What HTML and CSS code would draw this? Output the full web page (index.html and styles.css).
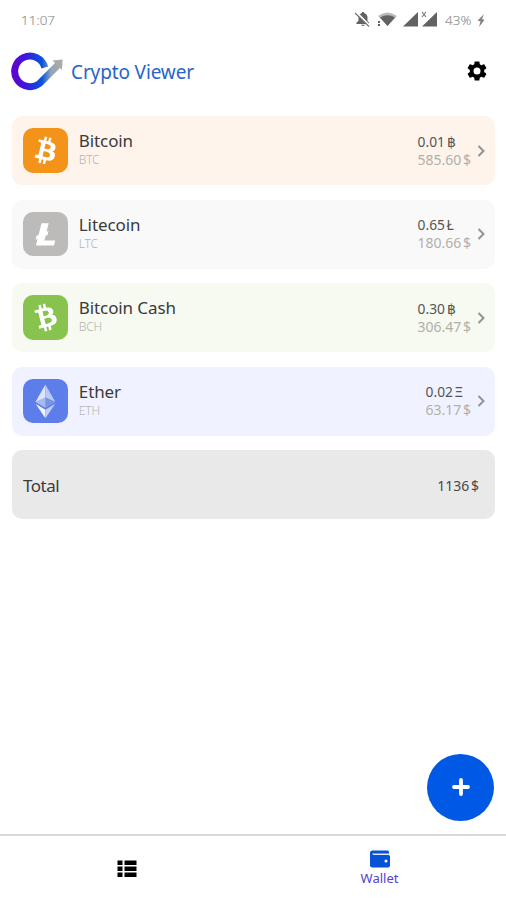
FILE: index.html
```html
<!DOCTYPE html>
<html lang="en">
<head>
<meta charset="utf-8">
<title>Crypto Viewer</title>
<link rel="stylesheet" href="styles.css">
</head>
<body>
<div class="app">
  <div class="status">
    <span class="time">11:07</span>
    <svg class="status-icons" width="90" height="20" viewBox="0 0 90 20">
      <g fill="#626262">
        <path d="M2.500 14v-1.500L4.500 11V7.500Q4.500 4 8 3V2h2v1Q13.500 4 13.500 7.500V11l1.500 1.500V14zM7 14.800h4Q9 17.300 7 14.800z"/>
        <path d="M24 6Q33-1 43 6L33.500 16z" fill="#b9b9b9"/>
        <path d="M26 7.500Q33.500 3 41 7.500L33.500 16z"/>
        <path d="M24 11h2v2h-2zM24 14h2v2h-2zM49 16.500L64 2v14.500zM68 16.500L83 2v14.500z"/>
      </g>
      <path d="M2 2L16 16" stroke="#fff" stroke-width="2"/>
      <path d="M1 3L15 16.500M68 2l4 5M72 2L68 7" stroke="#707070" stroke-width="1.100"/>
    </svg>
    <span class="battery">43%</span>
    <svg class="bolt" width="10" height="14" viewBox="0 0 10 14"><path d="M8 0L1.500 6.500l3 1-1.500 5.500L8.500 6l-2.500-1z" fill="#858585"/></svg>
  </div>
  <header class="header">
    <svg class="logo" width="52" height="42" viewBox="0 0 52 42">
      <defs><linearGradient id="ring" gradientUnits="userSpaceOnUse" x1="0" y1="0" x2="50" y2="0"><stop offset="0" stop-color="#6500cc"/><stop offset=".3" stop-color="#3c18dc"/><stop offset=".62" stop-color="#0755dc"/><stop offset=".8" stop-color="#93a5b8"/><stop offset="1" stop-color="#aaa"/></linearGradient></defs>
      <path d="M33.800 17.500A15.300 15.300 0 1 0 29.500 32.500L47.500 14.500" fill="none" stroke="url(#ring)" stroke-width="7" stroke-linejoin="round"/>
      <path d="M41.500 10.500l10-1-.5 10.500z" fill="#aaa"/>
    </svg>
    <h1 class="title">Crypto Viewer</h1>
    <svg class="gear" width="24" height="24" viewBox="0 0 24 24"><path d="M19.140 12.940c.04-.3.06-.61.06-.94s-.02-.64-.07-.94l2.030-1.580c.18-.14.23-.41.12-.61l-1.920-3.320c-.12-.22-.37-.29-.59-.22l-2.390.96c-.5-.38-1.030-.7-1.620-.94l-.36-2.540c-.04-.24-.24-.41-.48-.41h-3.840c-.24 0-.43.17-.47.41l-.36 2.540c-.59.24-1.130.57-1.620.94l-2.390-.96c-.22-.08-.47 0-.59.22L2.740 8.870c-.12.21-.08.47.12.61l2.030 1.580c-.05.3-.09.63-.09.94s.02.64.07.94l-2.030 1.580c-.18.14-.23.41-.12.61l1.920 3.320c.12.22.37.29.59.22l2.390-.96c.5.38 1.030.7 1.620.94l.36 2.540c.05.24.24.41.48.41h3.840c.24 0 .44-.17.47-.41l.36-2.540c.59-.24 1.130-.56 1.620-.94l2.390.96c.22.08.47 0 .59-.22l1.920-3.320c.12-.22.07-.47-.12-.61zM12 15.500a3.500 3.500 0 1 1 0-7 3.500 3.500 0 0 1 0 7z"/></svg>
  </header>
  <main class="cards">
    <section class="card btc">
      <svg class="coin" viewBox="0 0 32 32"><path id="bit" fill="#fff" d="M23.189 14.020c.314-2.096-1.283-3.223-3.465-3.975l.708-2.840-1.728-.43-.69 2.765c-.454-.114-.92-.22-1.385-.326l.695-2.783L15.596 6l-.708 2.839c-.376-.086-.746-.17-1.104-.26l.002-.009-2.384-.595-.46 1.846s1.283.294 1.256.312c.7.175.826.638.805 1.006l-.806 3.235c.048.012.11.03.18.057l-.183-.045-1.130 4.532c-.086.212-.303.531-.793.41.018.025-1.256-.313-1.256-.313l-.858 1.978 2.250.561c.418.105.828.215 1.231.318l-.715 2.872 1.727.43.708-2.840c.472.127.93.245 1.378.357l-.706 2.828 1.728.43.715-2.866c2.948.558 5.164.333 6.097-2.333.752-2.146-.037-3.385-1.588-4.192 1.130-.26 1.980-1.003 2.207-2.538zm-3.950 5.538c-.533 2.147-4.148.986-5.320.695l.95-3.805c1.172.293 4.929.872 4.370 3.110zm.535-5.569c-.487 1.953-3.495.96-4.470.717l.86-3.450c.975.243 4.118.696 3.610 2.733z"/></svg>
      <div class="names"><span class="name">Bitcoin</span><span class="code">BTC</span></div>
      <div class="values"><span class="amount">0.01 ฿</span><span class="fiat">585.60 $</span></div>
      <svg class="chevron" viewBox="0 0 8 14"><path d="M1.500 2L6.500 7l-5 5"/></svg>
    </section>
    <section class="card ltc">
      <svg class="coin" viewBox="0 0 32 32"><path fill="#fff" d="M10.427 19.214L9 19.768l.688-2.759 1.444-.58L13.213 8h5.129l-1.519 6.196 1.410-.571-.68 2.750-1.427.571-.848 3.483H23L22.127 24H9.252z"/></svg>
      <div class="names"><span class="name">Litecoin</span><span class="code">LTC</span></div>
      <div class="values"><span class="amount">0.65 Ł</span><span class="fiat">180.66 $</span></div>
      <svg class="chevron" viewBox="0 0 8 14"><path d="M1.500 2L6.500 7l-5 5"/></svg>
    </section>
    <section class="card bch">
      <svg class="coin" viewBox="0 0 32 32"><use href="#bit" transform="rotate(-28 16 16)"/></svg>
      <div class="names"><span class="name">Bitcoin Cash</span><span class="code">BCH</span></div>
      <div class="values"><span class="amount">0.30 ฿</span><span class="fiat">306.47 $</span></div>
      <svg class="chevron" viewBox="0 0 8 14"><path d="M1.500 2L6.500 7l-5 5"/></svg>
    </section>
    <section class="card eth">
      <svg class="coin" viewBox="0 0 32 32"><path fill="#dce5fd" d="M16 4L9 16.200l7 4.200z"/><path fill="#b9c9f8" d="M16 4l7 12.200-7 4.200z"/><path fill="#a8baf5" d="M9 16.200l7-3.200v7.400z"/><path fill="#7892e4" d="M16 13l7 3.200-7 4.200z"/><path fill="#f1f4ff" d="M9 17.700l7 4.200V28z"/><path fill="#c0cffa" d="M23 17.700l-7 4.200V28z"/></svg>
      <div class="names"><span class="name">Ether</span><span class="code">ETH</span></div>
      <div class="values"><span class="amount">0.02 Ξ</span><span class="fiat">63.17 $</span></div>
      <svg class="chevron" viewBox="0 0 8 14"><path d="M1.500 2L6.500 7l-5 5"/></svg>
    </section>
    <section class="card total"><span class="name">Total</span><span class="sum">1136 $</span></section>
  </main>
  <div class="actions"><button class="add" aria-label="Add"><svg width="18" height="18" viewBox="0 0 18 18"><path d="M9 2v14M2 9h14" stroke="#fff" stroke-width="3.800" stroke-linecap="round"/></svg></button></div>
  <nav class="tabs">
    <div class="tab"><svg width="20" height="18" viewBox="0 0 20 18"><path d="M.500.500h5v4.500h-5zM7.500.500h12v4.500h-12zM.500 6.500h5V11h-5zM7.500 6.500h12V11h-12zM.500 12.500h5V17h-5zM7.500 12.500h12V17h-12z"/></svg></div>
    <div class="tab wallet"><svg width="20" height="18" viewBox="0 0 20 18"><path fill="#0753d6" d="M2.500.500h15Q19 .500 19 2v2H3v1h15.500Q20 5 20 6.500v9Q20 17.500 18 17.500H2.500Q0 17.500 0 15V3Q0 .500 2.500.500z"/><path d="M2 3.800h17" stroke="#8fb4ee" stroke-width="1"/><circle cx="16" cy="11" r="1.500" fill="#fff"/></svg><span>Wallet</span></div>
  </nav>
</div>
</body>
</html>
```
FILE: styles.css
```css
* { box-sizing: border-box; }
body { margin: 0; background: #fff; font-family: "Noto Sans", "Open Sans", sans-serif; color: #333; }
.app { width: 506px; height: 900px; display: flex; flex-direction: column; overflow: hidden; }
svg { display: block; flex: none; }
.status { height: 40px; padding: 0 20px 0 21px; display: flex; align-items: center; color: #929292; font-family: "Open Sans", sans-serif; font-size: 13px; font-weight: 300; }
.time { font-size: 13.500px; -webkit-text-stroke: .2px; }
.status-icons { margin-left: auto; }
.battery { margin-left: 1px; width: 31px; font-size: 13.500px; -webkit-text-stroke: .2px; }
.bolt { margin-top: 2px; }
.header { height: 62px; padding: 0 17px 0 11px; display: flex; align-items: center; margin-bottom: 14px; }
.logo { margin-right: 8px; }
.title { margin: 2px 0 0; font-size: 19px; font-weight: 400; color: #2864c9; letter-spacing: -.13px; }
.gear { margin-left: auto; }
.cards { padding: 0 11px 0 12px; display: grid; gap: 14.5px; }
.card { height: 69px; border-radius: 10px; padding: 0 10px 0 11px; display: flex; align-items: center; }
.coin { width: 44.800px; height: 44.800px; border-radius: 10px; margin-right: 11px; }
.names, .values { display: flex; flex-direction: column; }
.names { margin-top: -3px; }
.name { font-size: 17px; line-height: 22px; color: #3b3b3b; letter-spacing: -.1px; }
.code { font-size: 12px; line-height: 16px; color: #b5b3b3; font-weight: 300; letter-spacing: -.2px; }
.values { margin-left: auto; margin-right: 6px; word-spacing: -2px; }
.amount { font-size: 13.800px; line-height: 18px; color: #555; }
.fiat { font-size: 14px; line-height: 18px; color: #b1afac; }
.chevron { width: 8px; height: 14px; fill: none; stroke: #929292; stroke-width: 2; }
.btc { background: #fff4eb; }
.btc .coin { background: #f39319; }
.ltc { background: #f9f9f9; }
.ltc .coin { background: #bdbbba; }
.bch { background: #f6faf0; }
.bch .coin { background: #88c34f; }
.eth { background: #f0f3ff; }
.eth .coin { background: #5d7dea; }
.total { background: #e9e9e9; padding: 2px 16px 0 11px; justify-content: space-between; }
.total .name { letter-spacing: -.5px; }
.sum { font-size: 14px; color: #484848; word-spacing: -2px; }
.actions { flex: 1; display: flex; align-items: flex-end; justify-content: flex-end; padding: 0 12px 13.500px 0; }
.add { width: 67px; height: 67px; border: 0; border-radius: 50%; padding: 0; background: #0059e5; display: grid; place-items: center; }
.tabs { height: 66px; border-top: 2px solid #d9d9d9; display: grid; grid-template-columns: 1fr 1fr; }
.tab { display: flex; flex-direction: column; align-items: center; justify-content: center; padding-top: 1px; }
.wallet { color: #5142d4; font-size: 13px; line-height: 18px; gap: 1px; padding-top: 0; }
```
